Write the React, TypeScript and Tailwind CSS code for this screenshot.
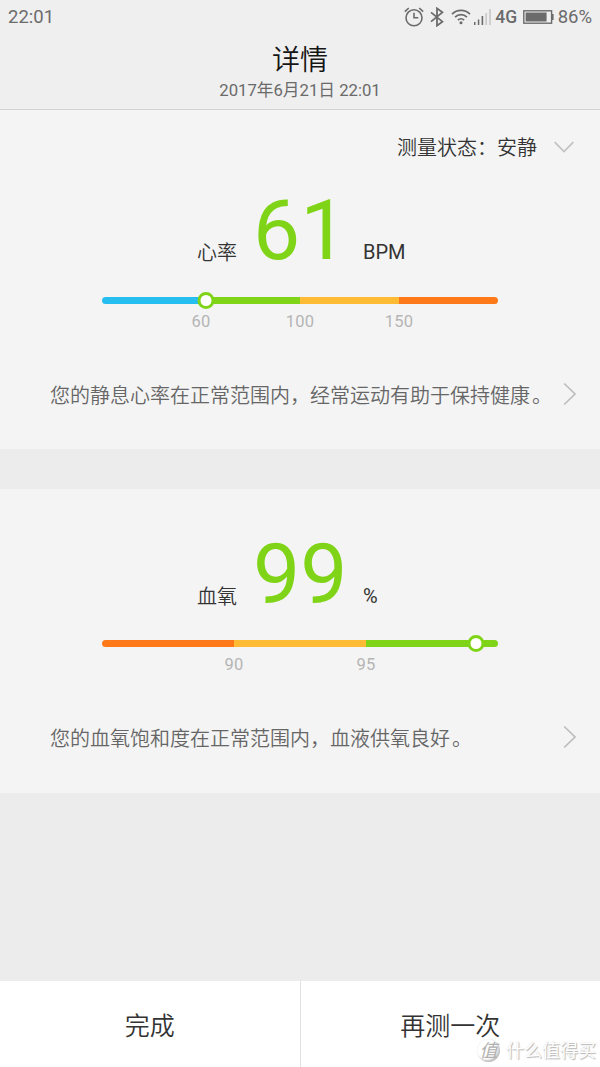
import type { ReactNode } from 'react';

type Segment = { color: string; label?: string };

const BLUE = 'bg-[#26bdef]';
const GREEN = 'bg-[#80d417]';
const YELLOW = 'bg-[#ffbb33]';
const ORANGE = 'bg-[#ff7919]';

const heartRateSegments: Segment[] = [
  { color: BLUE, label: '60' },
  { color: GREEN, label: '100' },
  { color: YELLOW, label: '150' },
  { color: ORANGE },
];

const oxygenSegments: Segment[] = [
  { color: ORANGE, label: '90' },
  { color: YELLOW, label: '95' },
  { color: GREEN },
];

function StatusBar() {
  return (
    <div className="flex h-[35px] items-center justify-between pl-2 pr-[8px] text-[18.5px] text-[#6b6b6b]">
      <span className="pt-px">22:01</span>
      <div className="flex items-center">
        {/* alarm */}
        <svg className="mb-[2px] mr-[6px]" width="20" height="20" viewBox="0 0 20 20" fill="none" stroke="currentColor" strokeWidth="1.6">
          <circle cx="10" cy="10.8" r="8" />
          <path d="M10 5.8v5h4.3M.8 4.6 4.8 1M19.2 4.6 15.2 1" />
        </svg>
        {/* bluetooth */}
        <svg className="mb-[2px] mr-[7px]" width="14" height="20" viewBox="0 0 14 20" fill="none" stroke="currentColor" strokeWidth="1.8">
          <path d="m1 5.4 11.4 9.2L7 18.6V1.4l5.4 4L1 14.6" />
        </svg>
        {/* wifi */}
        <svg className="mb-[2px] mr-[3px]" width="20" height="17" viewBox="0 0 21 18" fill="none" stroke="currentColor" strokeWidth="1.8">
          <path d="M1 6.4a13.4 13.4 0 0 1 19 0M4.2 9.7a8.9 8.9 0 0 1 12.6 0M7.2 12.8a4.7 4.7 0 0 1 6.6 0" />
          <circle cx="10.5" cy="15.6" r="1.6" fill="currentColor" stroke="none" />
        </svg>
        {/* mobile signal */}
        <svg className="mb-[1px] mr-[4px]" width="17" height="16" viewBox="0 0 17 16" fill="currentColor">
          <path d="M0 13h1.5v3H0zM3.8 10.5h1.5V16H3.8zM7.6 7h1.6v9H7.6z" />
          <path d="M11.4 4H13v12h-1.6zM15.2 0h1.6v16h-1.6z" opacity=".3" />
        </svg>
        <span className="mr-[5.5px] text-[17.5px] font-medium">4G</span>
        {/* battery */}
        <svg className="mb-[2px] mr-[4px]" width="31" height="14" viewBox="0 0 31 14">
          <rect x=".8" y=".8" width="27.8" height="12.4" fill="none" stroke="currentColor" strokeWidth="1.4" />
          <path d="M2.6 2.6h21v8.8h-21zM29 4h1.6v6H29z" fill="currentColor" />
        </svg>
        <span className="pt-px">86%</span>
      </div>
    </div>
  );
}

function RangeBar({ segments, position }: { segments: Segment[]; position: number }) {
  return (
    <div className="mx-auto w-[396px]">
      <div className="relative">
        <div className="flex h-[7px] overflow-hidden rounded-full">
          {segments.map((segment, i) => (
            <div key={i} className={`flex-1 ${segment.color}`} />
          ))}
        </div>
        <div
          className="absolute -top-[5px] size-[17px] -translate-x-1/2 rounded-full border-[3.5px] border-[#80d417] bg-white"
          style={{ left: position }}
        />
      </div>
      <div className="mt-2 flex text-[16.5px] leading-[20px] tracking-[0.3px] text-[#b5b5b5]">
        {segments.map((segment, i) => (
          <div key={i} className="flex flex-1 justify-end">
            <span className="translate-x-1/2">{segment.label}</span>
          </div>
        ))}
      </div>
    </div>
  );
}

function Reading({ label, value, unit }: { label: string; value: string; unit: string }) {
  return (
    <div className="flex h-[84px] items-baseline pl-[197px] text-[20px] leading-[84px] text-[#333]">
      <span className="w-[56px] translate-y-px font-[350]">{label}</span>
      <span className="w-[110px] text-[84px] text-[#80d417]">{value}</span>
      <span>{unit}</span>
    </div>
  );
}

function Advice({ children }: { children: ReactNode }) {
  return (
    <div className="flex h-7 items-center justify-between pl-[50px] pr-[23px] text-[20px] text-[#666]">
      <span className="whitespace-nowrap pt-[3px] font-[350]">
        {children}
        <span className="-mr-[2px] ml-[2px]">。</span>
      </span>
      <svg width="14" height="24" viewBox="0 0 14 24" fill="none" stroke="#bdbdbd" strokeWidth="1.7">
        <path d="M1.2 1.5 12 12 1.2 22.5" />
      </svg>
    </div>
  );
}

function Watermark() {
  return (
    <div className="absolute bottom-[3px] right-[4px] flex items-center gap-[6px] whitespace-nowrap text-[18px] font-normal text-white [text-shadow:1px_1px_1px_#b5b5b5,0_0_1px_#d4d4d4]">
      <span className="flex size-[23px] items-center justify-center rounded-full bg-white text-[18px] italic text-[#b0b0b0] shadow-[inset_-2px_-2px_2px_#c4c4c4,inset_0_0_1px_#ddd] [text-shadow:none]">
        值
      </span>
      <span>什么值得买</span>
    </div>
  );
}

export default function App() {
  return (
    <div className="flex h-[1067px] w-[600px] flex-col overflow-hidden bg-[#ececec] font-['Roboto','Noto_Sans_CJK_SC',sans-serif]">
      <header className="h-[110px] border-b border-[#d3d3d3] bg-[#efefef]">
        <StatusBar />
        <div className="text-center">
          <h1 className="pt-[6px] text-[28px] font-[350] leading-[40px] text-[#151515]">详情</h1>
          <p className="text-[16.7px] leading-[20px] text-[#6a6a6a]">2017年6月21日 22:01</p>
        </div>
      </header>

      <section className="h-[339px] bg-[#f4f4f4]">
        <div className="flex h-[74px] items-center justify-end pr-[26px] text-[20px] text-[#333]">
          <span className="pt-[1px] font-[350]">测量状态：安静</span>
          <svg className="ml-[17px]" width="20" height="12" viewBox="0 0 20 12" fill="none" stroke="#c2c2c2" strokeWidth="1.7">
            <path d="M.7 1.2 10 10.5l9.3-9.3" />
          </svg>
        </div>
        <div className="pt-[5px]">
          <Reading label="心率" value="61" unit="BPM" />
        </div>
        <div className="pt-6">
          <RangeBar segments={heartRateSegments} position={103.5} />
        </div>
        <div className="pt-12">
          <Advice>您的静息心率在正常范围内，经常运动有助于保持健康</Advice>
        </div>
      </section>

      <section className="mt-10 h-[304px] bg-[#f4f4f4] pt-[44px]">
        <Reading label="血氧" value="99" unit="%" />
        <div className="pt-[23px]">
          <RangeBar segments={oxygenSegments} position={373.5} />
        </div>
        <div className="pt-12">
          <Advice>您的血氧饱和度在正常范围内，血液供氧良好</Advice>
        </div>
      </section>

      <footer className="relative mt-auto flex h-[86px] bg-white text-[25px] font-[350] text-[#333]">
        <button className="flex-1 border-r border-[#e2e2e2] pt-[5px]">完成</button>
        <button className="flex-1 pt-[5px]">再测一次</button>
        <Watermark />
      </footer>
    </div>
  );
}
